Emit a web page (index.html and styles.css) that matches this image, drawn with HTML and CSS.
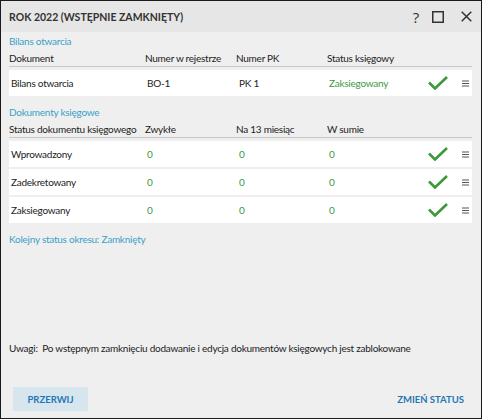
FILE: index.html
```html
<!DOCTYPE html>
<html lang="pl">
<head>
<meta charset="utf-8">
<link rel="stylesheet" href="styles.css">
</head>
<body>
<div class="dialog">
  <div class="titlebar">
    <div class="title">ROK 2022 (WSTĘPNIE ZAMKNIĘTY)</div>
    <div class="winbtns">
      <span class="help">?</span>
      <svg class="max" width="12" height="12" viewBox="0 0 12 12"><rect x="0.75" y="0.75" width="10.5" height="10.5" fill="none" stroke="#333" stroke-width="1.5"/></svg>
      <svg class="close" width="11" height="11" viewBox="0 0 11 11"><path d="M0.7 0.7 L10.3 10.3 M10.3 0.7 L0.7 10.3" stroke="#333" stroke-width="1.5"/></svg>
    </div>
  </div>
  <div class="content">
    <div class="section">Bilans otwarcia</div>
    <div class="thead">
      <span class="c1">Dokument</span><span class="c2">Numer w rejestrze</span><span class="c3">Numer PK</span><span class="c4">Status księgowy</span>
    </div>
    <div class="rows">
      <div class="row">
        <span class="c1">Bilans otwarcia</span><span class="c2">BO-1</span><span class="c3">PK 1</span><span class="c4 green">Zaksiegowany</span>
        <svg class="check" width="20" height="14" viewBox="0 0 20 14"><path d="M1 6.5 L7 12.5 L19 1" fill="none" stroke="#3b983b" stroke-width="2.6"/></svg>
        <svg class="menu" width="7" height="7" viewBox="0 0 7 7"><path d="M0 1 H7 M0 3.5 H7 M0 6 H7" stroke="#555" stroke-width="1.2"/></svg>
      </div>
    </div>

    <div class="section s2">Dokumenty księgowe</div>
    <div class="thead">
      <span class="c1">Status dokumentu księgowego</span><span class="c2">Zwykłe</span><span class="c3">Na 13 miesiąc</span><span class="c4">W sumie</span>
    </div>
    <div class="rows">
      <div class="row">
        <span class="c1">Wprowadzony</span><span class="c2 green">0</span><span class="c3 green">0</span><span class="c4 green">0</span>
        <svg class="check" width="20" height="14" viewBox="0 0 20 14"><path d="M1 6.5 L7 12.5 L19 1" fill="none" stroke="#3b983b" stroke-width="2.6"/></svg>
        <svg class="menu" width="7" height="7" viewBox="0 0 7 7"><path d="M0 1 H7 M0 3.5 H7 M0 6 H7" stroke="#555" stroke-width="1.2"/></svg>
      </div>
      <div class="row">
        <span class="c1">Zadekretowany</span><span class="c2 green">0</span><span class="c3 green">0</span><span class="c4 green">0</span>
        <svg class="check" width="20" height="14" viewBox="0 0 20 14"><path d="M1 6.5 L7 12.5 L19 1" fill="none" stroke="#3b983b" stroke-width="2.6"/></svg>
        <svg class="menu" width="7" height="7" viewBox="0 0 7 7"><path d="M0 1 H7 M0 3.5 H7 M0 6 H7" stroke="#555" stroke-width="1.2"/></svg>
      </div>
      <div class="row">
        <span class="c1">Zaksiegowany</span><span class="c2 green">0</span><span class="c3 green">0</span><span class="c4 green">0</span>
        <svg class="check" width="20" height="14" viewBox="0 0 20 14"><path d="M1 6.5 L7 12.5 L19 1" fill="none" stroke="#3b983b" stroke-width="2.6"/></svg>
        <svg class="menu" width="7" height="7" viewBox="0 0 7 7"><path d="M0 1 H7 M0 3.5 H7 M0 6 H7" stroke="#555" stroke-width="1.2"/></svg>
      </div>
    </div>

    <div class="section s3">Kolejny status okresu: Zamknięty</div>

    <div class="spacer"></div>
    <div class="note">Uwagi:&nbsp; Po wstępnym zamknięciu dodawanie i edycja dokumentów księgowych jest zablokowane</div>
  </div>
  <div class="footer">
    <button class="btn primary">PRZERWIJ</button>
    <button class="btn link">ZMIEŃ STATUS</button>
  </div>
</div>
</body>
</html>
```

FILE: styles.css
```css
* { box-sizing: border-box; }
html, body { margin: 0; padding: 0; }
body {
  font-family: Lato, "Noto Sans", sans-serif;
  font-size: 10px;
  letter-spacing: -0.25px;
  color: #222;
  background: #efefef;
}
.dialog {
  width: 482px;
  height: 419px;
  border: 1px solid #1a1a1a;
  background: #efefef;
  display: flex;
  flex-direction: column;
}
.titlebar {
  height: 31px;
  background: #e6e6e6;
  display: flex;
  align-items: center;
  justify-content: space-between;
  padding: 0 9px 0 8px;
  flex: none;
}
.title {
  font-weight: 700;
  font-size: 10.5px;
  letter-spacing: 0;
  color: #333;
  white-space: nowrap;
}
.winbtns {
  display: flex;
  align-items: center;
}
.help {
  font-family: "Open Sans", sans-serif;
  font-size: 15px;
  color: #333;
  margin-right: 13px;
}
.max { margin-right: 17px; }
.content {
  padding: 1px 8px 0 8px;
  flex: 1;
  display: flex;
  flex-direction: column;
}
.section {
  color: #3a9fc8;
  line-height: 16px;
  height: 16px;
  white-space: nowrap;
}
.s2 { margin-top: 8px; }
.s3 { margin-top: 8px; }
.thead {
  display: flex;
  height: 17px;
  line-height: 16px;
  border-bottom: 1px solid #c8c8c8;
  margin-top: 1px;
  margin-right: 1px;
  white-space: nowrap;
}
.rows {
  margin-top: 3px;
  display: flex;
  flex-direction: column;
  gap: 2px;
  margin-right: 1px;
}
.row {
  display: flex;
  align-items: center;
  height: 26px;
  background: #fff;
  padding-left: 2px;
  white-space: nowrap;
}
.c1 { width: 136px; flex: none; }
.c2 { width: 91px; flex: none; }
.c3 { width: 91px; flex: none; }
.c4 { width: 98px; flex: none; }
.row .c4 { width: 99px; }
.row .c3 { width: 90px; }
.row .c2 { width: 92px; }
.green { color: #3e9a3e; }
.check { margin-right: 14px; }
.spacer { flex: 1; }
.note {
  line-height: 16px;
  margin-bottom: 31px;
  white-space: nowrap;
}
.footer {
  height: 31px;
  flex: none;
  display: flex;
  justify-content: space-between;
  align-items: flex-start;
  padding: 0 17px 0 12px;
}
.btn {
  font-family: Lato, "Noto Sans", sans-serif;
  font-weight: 700;
  font-size: 9.5px;
  letter-spacing: 0;
  color: #1f78b5;
  border: none;
  height: 24px;
  cursor: pointer;
}
.primary {
  background: #d7e5ee;
  width: 75px;
}
.link {
  background: transparent;
  padding: 0;
}
```
